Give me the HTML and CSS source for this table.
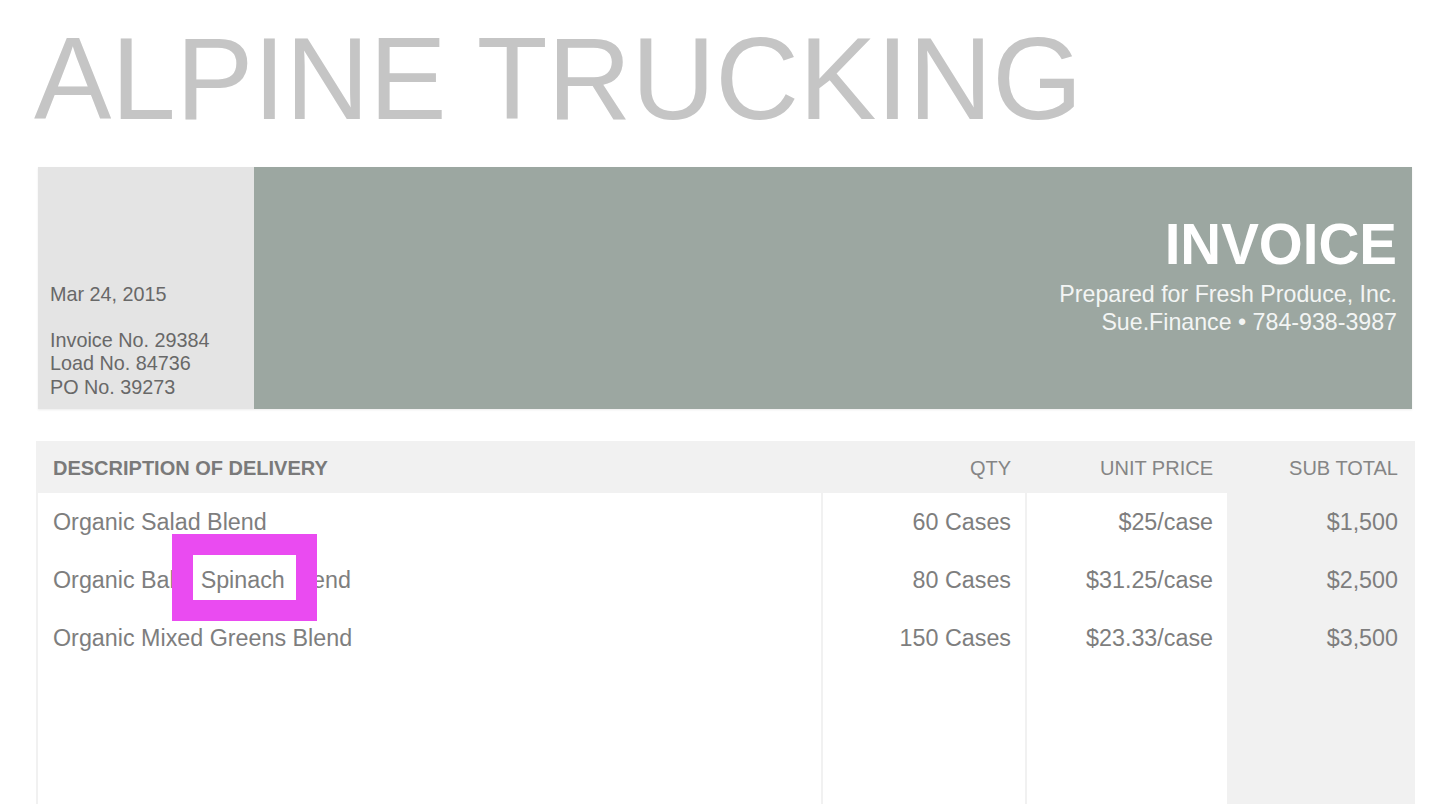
FILE: index.html
```html
<!DOCTYPE html>
<html lang="en">
<head>
<meta charset="utf-8">
<title>Alpine Trucking Invoice</title>
<link rel="stylesheet" href="styles.css">
</head>
<body>
<div class="page">
  <h1 class="brand">ALPINE TRUCKING</h1>

  <section class="banner">
    <div class="meta">
      <p class="date">Mar 24, 2015</p>
      <p>Invoice No. 29384<br>Load No. 84736<br>PO No. 39273</p>
    </div>
    <div class="title-block">
      <h2 class="invoice">INVOICE</h2>
      <p class="prepared">Prepared for Fresh Produce, Inc.<br>Sue.Finance &bull; 784-938-3987</p>
    </div>
  </section>

  <section class="items">
    <div class="cell head desc">DESCRIPTION OF DELIVERY</div>
    <div class="cell head num">QTY</div>
    <div class="cell head num">UNIT PRICE</div>
    <div class="cell head num sub">SUB TOTAL</div>

    <div class="cell desc">Organic Salad Blend</div>
    <div class="cell num">60 Cases</div>
    <div class="cell num">$25/case</div>
    <div class="cell num sub total">$1,500</div>

    <div class="cell desc">Organic Baby <span class="hl">Spinach</span> Blend</div>
    <div class="cell num">80 Cases</div>
    <div class="cell num">$31.25/case</div>
    <div class="cell num sub total">$2,500</div>

    <div class="cell desc">Organic Mixed Greens Blend</div>
    <div class="cell num">150 Cases</div>
    <div class="cell num">$23.33/case</div>
    <div class="cell num sub total">$3,500</div>

    <div class="cell filler"></div>
    <div class="cell filler"></div>
    <div class="cell filler"></div>
    <div class="cell filler sub"></div>
  </section>
</div>
</body>
</html>
```

FILE: styles.css
```css
*, *::before, *::after { box-sizing: border-box; }

html, body {
  margin: 0;
  padding: 0;
  background: #ffffff;
  font-family: "Liberation Sans", Arial, Helvetica, sans-serif;
  overflow: hidden;
}

.page {
  padding: 21px 31px 0 36px;
}

.brand {
  margin: 0 0 0 -2px;
  font-size: 116px;
  line-height: 116px;
  font-weight: 400;
  color: #c5c5c5;
  white-space: nowrap;
}

.banner {
  margin: 30px 3px 0 2px;
  height: 242px;
  display: flex;
  box-shadow: 0 1px 2px rgba(0, 0, 0, 0.08);
}

.meta {
  width: 216px;
  background: #e4e4e4;
  padding: 0 0 10px 12px;
  display: flex;
  flex-direction: column;
  justify-content: flex-end;
  color: #686868;
  font-size: 19.8px;
  line-height: 23.3px;
}

.meta p { margin: 0; }
.meta .date { margin-bottom: 23.3px; }

.title-block {
  flex: 1;
  background: #9ca7a1;
  padding: 50px 15px 0 0;
  text-align: right;
  color: #ffffff;
}

.invoice {
  margin: 0 0 7px;
  font-size: 56.5px;
  line-height: 56px;
  font-weight: 700;
  color: #ffffff;
}

.prepared {
  margin: 0;
  font-size: 23.2px;
  line-height: 28px;
  color: #f3f5f4;
}

.items {
  margin-top: 32px;
  display: grid;
  grid-template-columns: 783px 202px 200px 186px;
  column-gap: 2px;
  padding-left: 2px;
  background: #f1f1f1;
  width: 1379px;
}

.cell {
  background: #ffffff;
  font-size: 23.3px;
  line-height: 58px;
  color: #7e7e7e;
  white-space: nowrap;
}

.cell.head {
  background: #f1f1f1;
  font-size: 20px;
  line-height: 50px;
  padding-top: 2px;
  color: #858585;
}

.cell.head.desc {
  font-weight: 700;
  color: #7a7a7a;
  margin-left: -2px;
  padding-left: 17px;
}

.desc { padding-left: 15px; }
.num { text-align: right; padding-right: 14px; }
.cell.sub { background: #f1f1f1; padding-right: 17px; }

.filler { height: 200px; }

.hl {
  position: relative;
  z-index: 0;
}

.hl::before {
  content: "";
  position: absolute;
  left: -29px;
  top: -33px;
  width: 145px;
  height: 87px;
  background: #ffffff;
  border: 21px solid #ea4bf1;
  z-index: -1;
}
```
